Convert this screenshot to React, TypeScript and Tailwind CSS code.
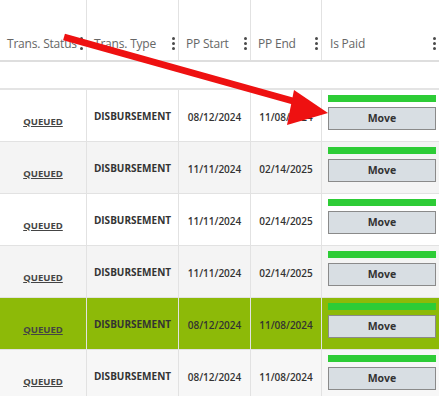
import React from 'react';

const rows = [
  { start: '08/12/2024', end: '11/08/2024', bg: 'bg-white' },
  { start: '11/11/2024', end: '02/14/2025', bg: 'bg-[#f4f4f4]' },
  { start: '11/11/2024', end: '02/14/2025', bg: 'bg-white' },
  { start: '11/11/2024', end: '02/14/2025', bg: 'bg-[#f4f4f4]' },
  { start: '08/12/2024', end: '11/08/2024', bg: 'bg-[#8dba08]' },
  { start: '08/12/2024', end: '11/08/2024', bg: 'bg-[#f7f7f7]' },
];

const Kebab = () => (
  <span className="flex flex-col gap-[2px] ml-auto mr-[3px] mb-[2px]">
    <span className="w-[3px] h-[3px] rounded-full bg-[#4a4a4a]" />
    <span className="w-[3px] h-[3px] rounded-full bg-[#4a4a4a]" />
    <span className="w-[3px] h-[3px] rounded-full bg-[#4a4a4a]" />
  </span>
);

const headers = ['Trans. Status', 'Trans. Type', 'PP Start', 'PP End', 'Is Paid'];

const App = () => {
  return (
    <div className="relative w-[439px] h-[396px] overflow-hidden bg-white" style={{ fontFamily: '"Open Sans", "Noto Sans", sans-serif' }}>
      {/* Header */}
      <div className="grid grid-cols-[87px_92px_72px_71px_117px] h-[62px] border-b-2 border-[#dedede]">
        {headers.map((h, i) => (
          <div key={h} className={`flex items-end pb-[8px] ${i === 4 ? 'pl-[8px] pr-0' : 'pl-[7px] border-r border-[#e2e2e2]'} ${i === 0 ? 'pl-[6px]' : ''}`}>
            <span className="text-[12px] leading-[16px] text-[#666] whitespace-nowrap tracking-[-0.2px]">{h}</span>
            <Kebab />
          </div>
        ))}
      </div>

      {/* Filter row */}
      <div className="h-[28px] border-b-2 border-[#e4e4e4] bg-white" />

      {/* Rows */}
      {rows.map((r, i) => (
        <div key={i} className={`grid grid-cols-[87px_92px_72px_71px_117px] h-[52px] border-b border-[#e2e2e2] ${r.bg}`}>
          <div className="flex justify-center pt-[26px] border-r border-[#e2e2e2]">
            <span className="text-[9.5px] font-bold underline text-[#444] leading-[12px]">QUEUED</span>
          </div>
          <div className="flex justify-center pt-[20px] border-r border-[#e2e2e2]">
            <span className="text-[10px] font-bold text-[#333] leading-[12px]">DISBURSEMENT</span>
          </div>
          <div className="flex justify-center pt-[21px] border-r border-[#e2e2e2]">
            <span className="text-[10px] font-semibold text-[#333] leading-[12px]">{r.start}</span>
          </div>
          <div className="flex justify-center pt-[21px] border-r border-[#e2e2e2]">
            <span className="text-[10px] font-semibold text-[#333] leading-[12px]">{r.end}</span>
          </div>
          <div className="flex flex-col pl-[6px] pr-[3px] pt-[5px] gap-[5px]">
            <div className="h-[7px] bg-[#2dcc36]" />
            <button className="h-[23px] bg-[#d8dee3] border border-[#8a8a8a] text-[10.5px] font-bold text-[#333] leading-none">
              Move
            </button>
          </div>
        </div>
      ))}

      {/* Arrow overlay */}
      <svg className="absolute left-0 top-0 pointer-events-none" width="439" height="396">
        <line x1="64" y1="37" x2="300" y2="103" stroke="#ee1111" strokeWidth="7" />
        <polygon points="328,113 294,90 287,125" fill="#ee1111" />
      </svg>
    </div>
  );
};

export default App;
